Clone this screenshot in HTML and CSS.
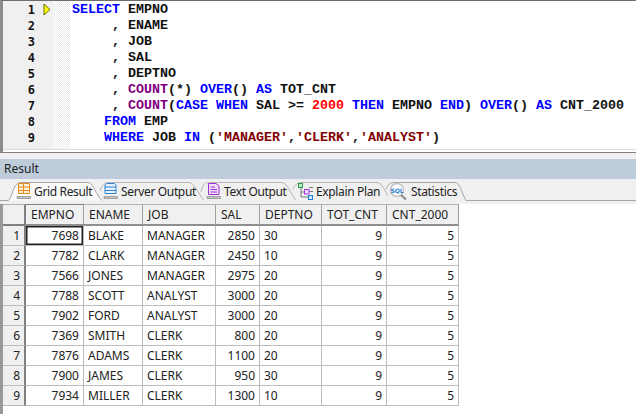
FILE: index.html
```html
<!DOCTYPE html>
<html>
<head>
<meta charset="utf-8">
<title>Result</title>
<link rel="stylesheet" href="styles.css">
</head>
<body>
<section class="editor">
  <div class="pane">
    <div class="gutter">
      <div class="nums"><div>1</div><div>2</div><div>3</div><div>4</div><div>5</div><div>6</div><div>7</div><div>8</div><div>9</div><div class="cut">10</div></div>
      <svg class="marker" width="8" height="13" viewBox="0 0 8 13"><path d="M1 1V12L7 6.5Z" fill="#ffff00" stroke="#6b6b00"/></svg>
    </div>
    <div class="dither"></div>
    <pre class="code"><span class="k">SELECT</span> EMPNO
     , ENAME
     , JOB
     , SAL
     , DEPTNO
     , <span class="f">COUNT</span>(*) <span class="k">OVER</span>() <span class="k">AS</span> TOT_CNT
     , <span class="f">COUNT</span>(<span class="k">CASE</span> <span class="k">WHEN</span> SAL &gt;= <span class="n">2000</span> <span class="k">THEN</span> EMPNO <span class="k">END</span>) <span class="k">OVER</span>() <span class="k">AS</span> CNT_2000
    <span class="k">FROM</span> EMP
    <span class="k">WHERE</span> JOB <span class="k">IN</span> (<span class="s">'MANAGER'</span>,<span class="s">'CLERK'</span>,<span class="s">'ANALYST'</span>)</pre>
  </div>
</section>
<div class="splitter"></div>
<header class="result-title">Result</header>
<nav class="tabs">
  <svg class="tab-lines" width="636" height="24" viewBox="0 0 636 24">
    <g transform="translate(0 2)">
      <path d="M0 19.500H8C12 19.500 12 3 20 1.500H88C93 1.500 96 14 102 19.500" fill="#fafafa" stroke="#a6a6a6"/>
      <path d="M100 10C102 4 104 1.500 109 1.500H189C194 1.500 198 12 204 19.500" fill="none" stroke="#b5b5b5"/>
      <path d="M201 11C202 5 204 1.500 209 1.500H282C287 1.500 291 13 296 19.500" fill="none" stroke="#b5b5b5"/>
      <path d="M293 8C295 4 297 1.500 301 1.500H377C382 1.500 385 10 388 15" fill="none" stroke="#b5b5b5"/>
      <path d="M386 8C388 4 390 1.500 394 1.500H455C460 1.500 462 13 466 19.500H636" fill="none" stroke="#a6a6a6"/>
    </g>
  </svg>
  <div class="tab tab-grid">
    <svg width="15" height="18" viewBox="0 0 15 18"><path d="M2.500 1.500H13.500V11.500H2.500ZM2.500 5H13.500M2.500 8.500H13.500M7.500 1.500V11.500" fill="#fff3d8" stroke="#e8891a"/><path d="M1 14.500H14.500V16.500H1Z" fill="#c4c4c4" stroke="#8a8a8a" stroke-width=".7"/></svg>
    <span>Grid Result</span>
  </div>
  <div class="tab tab-server">
    <svg width="15" height="18" viewBox="0 0 15 18"><path d="M3.500 1.500H11.500L13 3V11.500H2V3ZM2 5H13M2 8.500H13" fill="#e6f3fc" stroke="#2a86d2"/><path d="M1 14.500H14.500V16.500H1Z" fill="#c4c4c4" stroke="#8a8a8a" stroke-width=".7"/></svg>
    <span>Server Output</span>
  </div>
  <div class="tab tab-text">
    <svg width="15" height="18" viewBox="0 0 15 18"><path d="M2.500 1.500H10L13 4V12.500H2.500Z" fill="#f1e0fa" stroke="#a02fd8"/><path d="M4.500 5H9M4.500 7.500H11M4.500 10H11" stroke="#a02fd8"/><path d="M1 14.500H14.500V16.500H1Z" fill="#c4c4c4" stroke="#8a8a8a" stroke-width=".7"/></svg>
    <span>Text Output</span>
  </div>
  <div class="tab tab-plan">
    <svg width="17" height="19" viewBox="0 0 17 19"><path d="M4 5V15H11M4 10H7M12 9.500H16M12 5.500H16" fill="none" stroke="#777"/><rect x="1.500" y="1.500" width="4" height="4" fill="#bfeccb" stroke="#279a4c"/><rect x="7.500" y="7.500" width="4.500" height="4.500" fill="#f0d8fb" stroke="#a63ce0"/><rect x="11.500" y="13.500" width="4" height="4" fill="#d2eaff" stroke="#1b80cf"/></svg>
    <span>Explain Plan</span>
  </div>
  <div class="tab tab-stats">
    <svg width="18" height="19" viewBox="0 0 18 19"><circle cx="8" cy="8" r="6.500" fill="#fff" stroke="#c4c4c4" stroke-width="1.500"/><path d="M12 13L17 17.500" stroke="#888" stroke-width="2"/><text x="8" y="10.500" text-anchor="middle" class="sql">SQL</text></svg>
    <span>Statistics</span>
  </div>
</nav>
<main class="grid-area">
<table class="grid">
  <colgroup><col class="c0"><col class="c1"><col class="c2"><col class="c3"><col class="c4"><col class="c5"><col class="c6"><col class="c7"></colgroup>
  <thead><tr><th class="corner"></th><th class="first">EMPNO</th><th>ENAME</th><th>JOB</th><th>SAL</th><th>DEPTNO</th><th>TOT_CNT</th><th>CNT_2000</th></tr></thead>
  <tbody>
    <tr><th class="active-row">1</th><td class="r selected">7698</td><td>BLAKE</td><td>MANAGER</td><td class="r">2850</td><td>30</td><td class="r">9</td><td class="r">5</td></tr>
    <tr><th>2</th><td class="r">7782</td><td>CLARK</td><td>MANAGER</td><td class="r">2450</td><td>10</td><td class="r">9</td><td class="r">5</td></tr>
    <tr><th>3</th><td class="r">7566</td><td>JONES</td><td>MANAGER</td><td class="r">2975</td><td>20</td><td class="r">9</td><td class="r">5</td></tr>
    <tr><th>4</th><td class="r">7788</td><td>SCOTT</td><td>ANALYST</td><td class="r">3000</td><td>20</td><td class="r">9</td><td class="r">5</td></tr>
    <tr><th>5</th><td class="r">7902</td><td>FORD</td><td>ANALYST</td><td class="r">3000</td><td>20</td><td class="r">9</td><td class="r">5</td></tr>
    <tr><th>6</th><td class="r">7369</td><td>SMITH</td><td>CLERK</td><td class="r">800</td><td>20</td><td class="r">9</td><td class="r">5</td></tr>
    <tr><th>7</th><td class="r">7876</td><td>ADAMS</td><td>CLERK</td><td class="r">1100</td><td>20</td><td class="r">9</td><td class="r">5</td></tr>
    <tr><th>8</th><td class="r">7900</td><td>JAMES</td><td>CLERK</td><td class="r">950</td><td>30</td><td class="r">9</td><td class="r">5</td></tr>
    <tr><th>9</th><td class="r">7934</td><td>MILLER</td><td>CLERK</td><td class="r">1300</td><td>10</td><td class="r">9</td><td class="r">5</td></tr>
  </tbody>
</table>
</main>
</body>
</html>
```
FILE: styles.css
```css
* { box-sizing: border-box; }
html, body { margin: 0; padding: 0; }
body {
  width: 636px;
  height: 414px;
  overflow: hidden;
  background: #fff;
  font-family: "Noto Sans", "Open Sans", sans-serif;
  font-size: 12px;
  color: #222;
}
.editor {
  height: 153px;
  padding-bottom: 2px;
  overflow: hidden;
  background: #fff;
  border-top: 1px solid #6e6e6e;
  border-left: 3px solid #8c8c8c;
  border-bottom: 1px solid #808080;
}
.pane {
  display: flex;
  height: 149px;
  overflow: hidden;
  border-bottom: 1px solid #dcdcdc;
}
.gutter {
  position: relative;
  flex: none;
  width: 50px;
  background: #f0f0f0;
}
.dither {
  flex: none;
  width: 17px;
  background: repeating-conic-gradient(#ececec 0 25%, #fff 0 50%) 0 0 / 2px 2px;
}
.nums {
  width: 32px;
  padding-top: 1px;
  text-align: right;
  font: bold 12px/16px "DejaVu Sans Mono", monospace;
  color: #111;
}
.nums .cut { height: 6px; overflow: hidden; }
.marker { position: absolute; left: 40px; top: 2px; }
.code {
  margin: 0;
  padding: 1px 0 0 2px;
  font: bold 13.33px/16px "Liberation Mono", monospace;
  color: #111;
}
.k { color: #0000ff; }
.f { color: #800080; }
.n { color: #ff0000; }
.s { color: #800000; }
.splitter { height: 6px; background: #f0f0f0; }
.result-title {
  height: 20px;
  padding-left: 4px;
  background: #bfcddb;
  font-size: 12px;
  line-height: 20px;
  color: #222;
}
.tabs {
  position: relative;
  display: flex;
  height: 25px;
  background: #f0f0f0;
  padding-left: 16px;
}
.tab-lines { position: absolute; left: 0; top: 0; }
.tab {
  position: relative;
  display: flex;
  align-items: center;
  gap: 3px;
  height: 24px;
  white-space: nowrap;
  letter-spacing: -0.35px;
}
.tab svg { flex: none; }
.tab-grid { width: 87px; }
.tab-server { width: 103px; }
.tab-text { width: 91px; }
.tab-plan { width: 92px; gap: 2px; }
.tab-stats { gap: 4px; }
.sql { font: bold 6px "DejaVu Sans", sans-serif; fill: #1b80cf; letter-spacing: 0; }
.grid-area {
  height: 210px;
  background: #fff;
  border-left: 3px solid #999;
  box-shadow: inset 0 0 0 0 transparent;
}
.grid {
  table-layout: fixed;
  width: 456px;
  border-collapse: separate;
  border-spacing: 0;
  font-size: 12px;
}
.c0 { width: 23px; }
.c1 { width: 58px; }
.c2 { width: 59px; }
.c3 { width: 73px; }
.c4 { width: 44px; }
.c5 { width: 62px; }
.c6 { width: 65px; }
.c7 { width: 72px; }
.grid thead th {
  height: 22px;
  padding: 0 0 0 5px;
  font-weight: normal;
  text-align: left;
  background: #f0f0f0;
  border-right: 1px solid #a0a0a0;
  border-bottom: 2px solid #8f8f8f;
  border-top: 1px solid #b4b4b4;
}
.grid thead th.corner { padding: 0; border-bottom: 2px solid #808080; border-right: 2px solid #808080; }
.grid thead th.first { border-top: 1px solid #808080; }
.grid tbody th {
  height: 20px;
  padding: 0 4px 0 0;
  font-weight: normal;
  text-align: right;
  background: #f0f0f0;
  border-right: 2px solid #808080;
  border-bottom: 1px solid #bdbdbd;
}
.grid td {
  height: 20px;
  padding: 0 4px;
  border-right: 1px solid #bdbdbd;
  border-bottom: 1px solid #bdbdbd;
  white-space: nowrap;
}
.grid td.r { text-align: right; }
.grid td.selected { box-shadow: inset 0 0 0 1.5px #222; }
```
